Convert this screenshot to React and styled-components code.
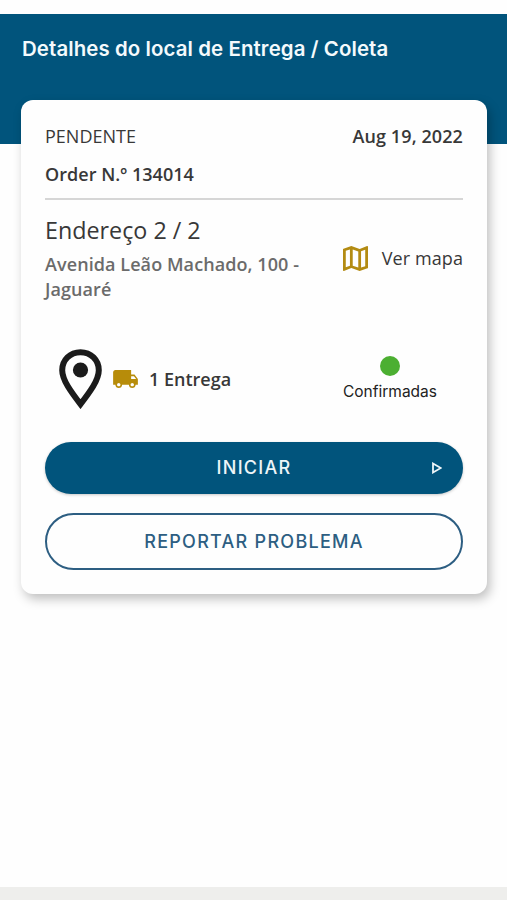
import React from "react";
import styled, { createGlobalStyle } from "styled-components";

const GlobalStyle = createGlobalStyle`
  * { box-sizing: border-box; }
  body { margin: 0; background: #fefefe; font-family: "Open Sans", sans-serif; color: #333; }
  button { font: inherit; margin: 0; padding: 0; cursor: pointer; }
`;

const Page = styled.main`
  display: flex;
  flex-direction: column;
  height: 900px;
  padding-top: 13.6px;
  overflow: hidden;
`;

const Header = styled.header`
  flex: none;
  height: 130.8px;
  padding: 21.4px 22px 0;
  background: #01547c;
`;

const Title = styled.h1`
  margin: 0;
  font: 600 20.4px/28px Inter, sans-serif;
  letter-spacing: 0.11px;
  color: #f4fafc;
  white-space: nowrap;
`;

const Card = styled.section`
  position: relative;
  flex: none;
  display: flex;
  flex-direction: column;
  height: 494px;
  margin: -44.8px 20px 0 21px;
  padding: 24.4px 24px 0;
  border-radius: 12px;
  background: #fefefe;
  box-shadow: 3px 5px 11px rgba(0, 0, 0, 0.25);
`;

const Row = styled.div`
  display: flex;
  justify-content: space-between;
  align-items: center;
`;

const Text = styled.span`
  font-size: ${(p) => p.$size || 18}px;
  line-height: ${(p) => p.$line || 24}px;
  font-weight: ${(p) => p.$weight || 400};
  letter-spacing: ${(p) => p.$spacing || 0}px;
  color: ${(p) => p.$color || "#383838"};
  white-space: nowrap;
`;

const OrderNumber = styled(Text)`
  margin-top: 14px;
`;

const Divider = styled.hr`
  width: 100%;
  height: 2px;
  margin: 12px 0 0;
  border: 0;
  background: #d6d6d6;
`;

const AddressRow = styled(Row)`
  height: 104px;
  margin-top: 15.2px;
`;

const Address = styled.div`
  display: flex;
  flex-direction: column;
  align-self: flex-start;
  gap: 5px;
  margin-top: -2px;
`;

const MapLink = styled.button`
  display: flex;
  align-items: center;
  gap: 14px;
  margin: -18px 0 0;
  border: 0;
  background: none;
`;

const DeliveryRow = styled(Row)`
  height: 62px;
  margin-top: 28.4px;
`;

const Delivery = styled.div`
  display: flex;
  align-items: center;
  margin-left: 14px;
`;

const Truck = styled.svg`
  margin: 0 11px 0 11px;
`;

const Status = styled.div`
  display: flex;
  flex-direction: column;
  align-items: center;
  gap: 6px;
  margin-right: 26px;
  padding-top: 1px;
`;

const Dot = styled.i`
  width: 20px;
  height: 20px;
  border-radius: 50%;
  background: #4caf32;
`;

const StatusLabel = styled.span`
  font: 400 15.5px/20px Inter, sans-serif;
  color: #222;
`;

const PillButton = styled.button`
  display: grid;
  grid-template-columns: 1fr auto 1fr;
  align-items: center;
  flex: none;
  height: ${(p) => (p.$primary ? 52 : 57)}px;
  margin-top: ${(p) => (p.$primary ? 32.3 : 19.5)}px;
  border: ${(p) => (p.$primary ? "0" : "2px solid #2d5e82")};
  border-radius: 29px;
  background: ${(p) => (p.$primary ? "#01547c" : "transparent")};
  box-shadow: ${(p) => (p.$primary ? "0 1px 3px rgba(0, 0, 0, 0.22)" : "none")};
  color: ${(p) => (p.$primary ? "#eef5f8" : "#2d5e82")};
`;

const ButtonLabel = styled.span`
  grid-column: 2;
  font: 500 18px/24px Inter, sans-serif;
  letter-spacing: 1.27px;
`;

const PlayIcon = styled.svg`
  justify-self: end;
  margin-right: 21px;
`;

const BottomBar = styled.footer`
  flex: none;
  height: 13.5px;
  margin-top: auto;
  background: #eeeeec;
`;

export default function App() {
  return (
    <>
      <GlobalStyle />
      <Page>
        <Header>
          <Title>Detalhes do local de Entrega / Coleta</Title>
        </Header>
        <Card>
          <Row>
            <Text>PENDENTE</Text>
            <Text $weight={600} $spacing={0.1}>Aug 19, 2022</Text>
          </Row>
          <OrderNumber $weight={600} $spacing={0.04}>Order N.º 134014</OrderNumber>
          <Divider />
          <AddressRow>
            <Address>
              <Text $size={23.3} $line={34}>Endereço 2 / 2</Text>
              <Text $weight={600} $line={25} $color="#6b6b6b" $spacing={0.08}>
                Avenida Leão Machado, 100 -<br />Jaguaré
              </Text>
            </Address>
            <MapLink>
              <svg width="25" height="25" viewBox="3 3 18 18" fill="#b38b12">
                <path d="m20.5 3-.16.03L15 5.1 9 3 3.36 4.9c-.21.07-.36.25-.36.48V20.5c0 .28.22.5.5.5l.16-.03L9 18.9l6 2.1 5.64-1.9c.21-.07.36-.25.36-.48V3.5c0-.28-.22-.5-.5-.5zM10 5.47l4 1.4v11.66l-4-1.4V5.47zm-5 .99 3-1.01v11.7l-3 1.16V6.46zm14 11.08-3 1.01V6.86l3-1.16v11.84z" />
              </svg>
              <Text $spacing={0.1}>Ver mapa</Text>
            </MapLink>
          </AddressRow>
          <DeliveryRow>
            <Delivery>
              <svg width="43" height="60" viewBox="0 0 43 60">
                <path d="M21.5 3.2C11 3.2 3.2 11 3.2 21.2c0 10 9.3 22.3 18.3 34 9-11.7 18.3-24 18.3-34C39.8 11 32 3.2 21.5 3.2Z" fill="none" stroke="#1b1b1b" strokeWidth="6" />
                <circle cx="21.5" cy="21" r="7.6" fill="#1b1b1b" />
              </svg>
              <Truck width="25" height="18" viewBox="1 4 22 16" fill="#b78c0a">
                <path d="M20 8h-3V4H3c-1.1 0-2 .9-2 2v11h2c0 1.66 1.34 3 3 3s3-1.34 3-3h6c0 1.66 1.34 3 3 3s3-1.34 3-3h2v-5l-3-4zM6 18.5c-.83 0-1.5-.67-1.5-1.5s.67-1.5 1.5-1.5 1.5.67 1.5 1.5-.67 1.5-1.5 1.5zm13.5-9 1.96 2.5H17V9.5h2.5zm-1.5 9c-.83 0-1.5-.67-1.5-1.5s.67-1.5 1.5-1.5 1.5.67 1.5 1.5-.67 1.5-1.5 1.5z" />
              </Truck>
              <Text $weight={600}>1 Entrega</Text>
            </Delivery>
            <Status>
              <Dot />
              <StatusLabel>Confirmadas</StatusLabel>
            </Status>
          </DeliveryRow>
          <PillButton $primary>
            <ButtonLabel>INICIAR</ButtonLabel>
            <PlayIcon width="10" height="12" viewBox="0 0 10 12">
              <path d="M1 1.5v9L8.8 6Z" fill="none" stroke="#eef5f8" strokeWidth="1.8" />
            </PlayIcon>
          </PillButton>
          <PillButton>
            <ButtonLabel>REPORTAR PROBLEMA</ButtonLabel>
          </PillButton>
        </Card>
        <BottomBar />
      </Page>
    </>
  );
}
